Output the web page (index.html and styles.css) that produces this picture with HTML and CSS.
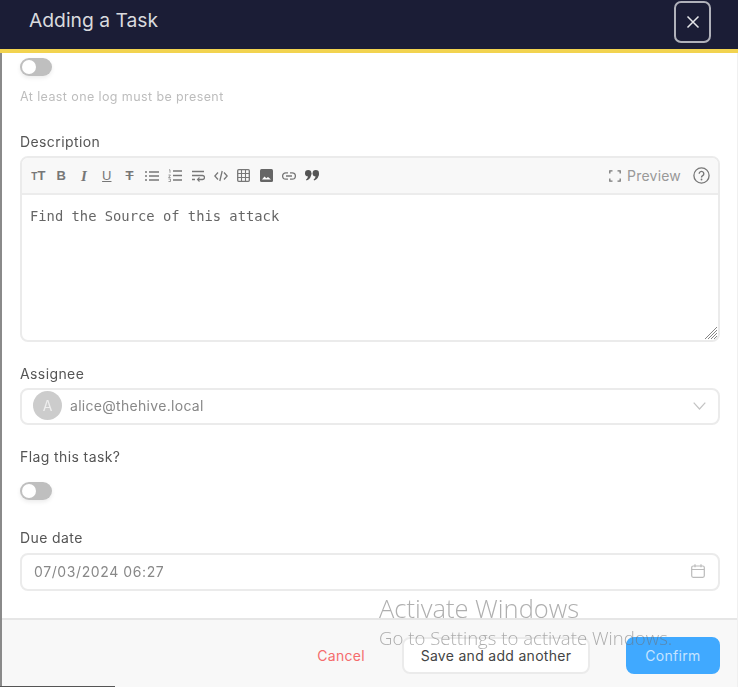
FILE: index.html
```html
<!DOCTYPE html>
<html lang="en">

<head>
  <meta charset="UTF-8" />
  <title>Adding a Task</title>
  <link rel="stylesheet" href="styles.css">
</head>

<body>
  <div class="drawer">
    <header class="drawer-head">
      <h1 class="drawer-title">Adding a Task</h1>
      <button class="close-btn" aria-label="Close">
        <svg width="14" height="14" viewBox="0 0 14 14"><path d="M1.5 1.5l11 11M12.5 1.5l-11 11" stroke="#e6e7ea" stroke-width="1.5" fill="none" /></svg>
      </button>
    </header>

    <main class="drawer-body">
      <span class="toggle"></span>
      <p class="hint">At least one log must be present</p>

      <label class="field-label label-description">Description</label>
      <div class="editor">
        <div class="toolbar">
          <span class="tool tool-text"><small>T</small>T</span>
          <span class="tool tool-text tool-b">B</span>
          <span class="tool tool-text tool-i">I</span>
          <span class="tool tool-text tool-u">U</span>
          <span class="tool tool-text tool-s">T</span>
          <span class="tool">
            <svg width="14" height="12" viewBox="0 0 14 12"><path d="M4 2h10M4 6h10M4 10h10M0 2h2M0 6h2M0 10h2" stroke="#777" stroke-width="1.3" fill="none" /></svg>
          </span>
          <span class="tool">
            <svg width="14" height="13" viewBox="0 0 14 13"><path d="M5 2h9M5 6.500h9M5 11h9" stroke="#777" stroke-width="1.3" fill="none" /><path d="M1 .8h1v3M.5 6h2L.6 8.500h2M.5 10h2v2.500h-2" stroke="#777" stroke-width=".7" fill="none" /></svg>
          </span>
          <span class="tool">
            <svg width="14" height="12" viewBox="0 0 14 12"><path d="M1 1.500h12M1 5.500h10.500a1.800 1.800 0 0 1 0 4H7M1 9.500h3" stroke="#777" stroke-width="1.300" fill="none" /><path d="M8.500 7.500l-2 2 2 2" stroke="#777" stroke-width="1.100" fill="none" /></svg>
          </span>
          <span class="tool">
            <svg width="14" height="12" viewBox="0 0 14 12"><path d="M4 2.500L.8 6 4 9.500M10 2.500L13.200 6 10 9.500M8.200 1L5.800 11" stroke="#777" stroke-width="1.300" fill="none" /></svg>
          </span>
          <span class="tool">
            <svg width="13" height="13" viewBox="0 0 13 13"><rect x=".7" y=".7" width="11.600" height="11.600" rx="1" stroke="#777" stroke-width="1.300" fill="none" /><path d="M.7 4.500h11.600M.7 8.500h11.600M4.500 .7v11.600M8.500 .7v11.600" stroke="#777" stroke-width="1.100" fill="none" /></svg>
          </span>
          <span class="tool">
            <svg width="13" height="13" viewBox="0 0 13 13"><rect width="13" height="13" rx="1.500" fill="#666" /><path d="M2 10.500l2.500-3 1.800 1.800 1.700-1.300 3 2.500z" fill="#fff" /></svg>
          </span>
          <span class="tool">
            <svg width="14" height="8" viewBox="0 0 14 8"><path d="M6 .8H3.800a3.200 3.200 0 0 0 0 6.400H6M8 .8h2.200a3.200 3.200 0 0 1 0 6.400H8M4 4h6" stroke="#777" stroke-width="1.300" fill="none" /></svg>
          </span>
          <span class="tool">
            <svg width="14" height="11" viewBox="0 0 14 11"><circle cx="3.200" cy="3.200" r="3.200" fill="#555" /><circle cx="10.800" cy="3.200" r="3.200" fill="#555" /><path d="M6.400 3.200C6.400 7 4.500 9.500 1.500 10.500L1 9.500C2.500 8.500 3 7 3 6M14 3.200C14 7 12.100 9.500 9.100 10.500L8.600 9.500C10.100 8.500 10.600 7 10.600 6z" fill="#555" /></svg>
          </span>
          <span class="toolbar-right">
            <svg width="12" height="12" viewBox="0 0 12 12"><path d="M.8 3.500V.8h2.700M8.500 .8h2.700v2.700M11.200 8.500v2.700H8.500M3.500 11.200H.8V8.500" stroke="#777" stroke-width="1.300" fill="none" /></svg>
            <span class="preview">Preview</span>
            <svg class="help" width="17" height="17" viewBox="0 0 17 17"><circle cx="8.500" cy="8.500" r="7.600" stroke="#777" stroke-width="1.300" fill="none" /><path d="M6.200 6.700a2.300 2.300 0 1 1 3.500 2c-.8 .5-1.200 .9-1.200 1.700" stroke="#777" stroke-width="1.400" fill="none" /><circle cx="8.500" cy="12.500" r=".9" fill="#777" /></svg>
          </span>
        </div>
        <div class="editor-text">
          Find the Source of this attack
          <svg class="grip" width="14" height="14" viewBox="0 0 14 14"><path d="M13 1L1 13M13 4L4 13M13 7L7 13M13 10l-3 3" stroke="#777" stroke-width=".9" fill="none" /></svg>
        </div>
      </div>

      <label class="field-label label-assignee">Assignee</label>
      <div class="select">
        <span class="avatar">A</span>
        <span class="select-value">alice@thehive.local</span>
        <svg class="chevron" width="13" height="8" viewBox="0 0 13 8"><path d="M.7 .7l5.800 6.300L12.300 .7" stroke="#c4c4c4" stroke-width="1.200" fill="none" /></svg>
      </div>

      <label class="field-label label-flag">Flag this task?</label>
      <span class="toggle toggle-flag"></span>

      <label class="field-label label-due">Due date</label>
      <div class="date-input">
        <span class="date-value">07/03/2024 06:27</span>
        <svg width="14" height="14" viewBox="0 0 14 14"><rect x=".7" y="2" width="12.600" height="11.300" rx="1.500" stroke="#bbb" stroke-width="1.200" fill="none" /><path d="M.7 5.500h12.600M4 .3v3M10 .3v3" stroke="#bbb" stroke-width="1.200" fill="none" /></svg>
      </div>
    </main>

    <footer class="drawer-foot">
      <a class="cancel">Cancel</a>
      <button class="btn">Save and add another</button>
      <button class="btn btn-primary">Confirm</button>
    </footer>
  </div>

  <!-- os watermark and taskbar sliver sit over the page -->
  <div class="watermark">
    <div class="watermark-title">Activate Windows</div>
    <div class="watermark-sub">Go to Settings to activate Windows.</div>
  </div>
  <div class="sliver"></div>
</body>

</html>
```

FILE: styles.css
```css
html,
body {
  height: 100%;
}

body {
  margin: 0;
  font-family: 'Inter', 'Open Sans', sans-serif;
  color: #555;
  background: #fff;
  overflow: hidden;
  position: relative;
}

.drawer {
  height: 687px;
  display: flex;
  flex-direction: column;
  border-left: 2px solid #8a8a8a;
  border-right: 1px solid #f0f0f0;
  box-sizing: border-box;
  filter: blur(0.5px);
}

.drawer-head {
  height: 53px;
  box-sizing: border-box;
  flex: none;
  margin-left: -2px;
  margin-right: -1px;
  background: #1b1d36;
  border-bottom: 4px solid #f2d34f;
  display: flex;
  align-items: center;
  justify-content: space-between;
  padding: 0 27px 9px 29px;
}

.drawer-title {
  margin: 0;
  font-size: 19.300px;
  font-weight: 400;
  color: #d9dade;
}

.close-btn {
  width: 37px;
  height: 42px;
  margin-top: 4px;
  padding: 0;
  background: transparent;
  border: 2px solid #b0b1ba;
  border-radius: 7px;
  display: flex;
  align-items: center;
  justify-content: center;
}

.drawer-body {
  flex: 1;
  padding: 5px 17px 0 18px;
  display: flex;
  flex-direction: column;
  align-items: flex-start;
}

.toggle {
  width: 32px;
  height: 18px;
  border-radius: 9px;
  background: #bfbfbf;
  position: relative;
  flex: none;
  box-shadow: 0 2px 4px rgba(0, 0, 0, 0.08);
}

.toggle::after {
  content: "";
  position: absolute;
  left: 2px;
  top: 2px;
  width: 14px;
  height: 14px;
  border-radius: 50%;
  background: #fff;
}

.hint {
  margin: 13px 0 0;
  font-size: 12.500px;
  letter-spacing: 0.4px;
  line-height: 16px;
  color: #bdbdbd;
}

.field-label {
  font-size: 14px;
  letter-spacing: 0.4px;
  line-height: 18px;
  color: #555;
}

.label-description {
  margin-top: 28px;
}

.editor {
  width: 100%;
  height: 186px;
  flex: none;
  margin-top: 5px;
  box-sizing: border-box;
  border: 2px solid #ebebeb;
  border-radius: 8px;
  display: flex;
  flex-direction: column;
  overflow: hidden;
}

.toolbar {
  height: 37px;
  flex: none;
  box-sizing: border-box;
  background: #f8f8f8;
  border-bottom: 2px solid #ececec;
  display: flex;
  align-items: center;
  padding-left: 5px;
  padding-right: 8px;
}

.tool {
  width: 22.800px;
  flex: none;
  display: flex;
  align-items: center;
  justify-content: center;
}

.tool-text {
  font-family: 'Liberation Sans', sans-serif;
  font-size: 13px;
  line-height: 14px;
  font-weight: 700;
  color: #777;
}

.tool-text small {
  font-size: 10px;
  margin-top: 3px;
}

.tool-i {
  font-style: italic;
  font-family: 'Liberation Serif', serif;
  font-size: 15px;
}

.tool-u {
  text-decoration: underline;
  font-weight: 400;
}

.tool-s {
  text-decoration: line-through;
  font-weight: 700;
}

.toolbar-right {
  margin-left: auto;
  display: flex;
  align-items: center;
  color: #999;
}

.preview {
  margin-left: 6px;
  font-size: 14px;
  letter-spacing: 0.2px;
}

.help {
  margin-left: 12px;
}

.editor-text {
  flex: 1;
  position: relative;
  padding: 13px 8px;
  font-family: 'DejaVu Sans Mono', monospace;
  font-size: 13.800px;
  line-height: 16px;
  color: #666;
}

.grip {
  position: absolute;
  right: 0;
  bottom: 0;
}

.label-assignee {
  margin-top: 23px;
}

.select,
.date-input {
  width: 100%;
  flex: none;
  box-sizing: border-box;
  border: 2px solid #ebebeb;
  border-radius: 8px;
  display: flex;
  align-items: center;
  font-size: 14px;
  color: #888;
}

.select {
  height: 37px;
  margin-top: 5px;
  padding: 0 12px 2px 11px;
}

.avatar {
  width: 29px;
  height: 29px;
  border-radius: 50%;
  background: #cccccc;
  color: #eee;
  font-size: 14px;
  display: flex;
  align-items: center;
  justify-content: center;
  flex: none;
}

.select-value {
  margin-left: 8px;
  letter-spacing: 0.3px;
}

.chevron {
  margin-left: auto;
}

.label-flag {
  margin-top: 23px;
}

.toggle-flag {
  margin-top: 16px;
}

.label-due {
  margin-top: 29px;
}

.date-input {
  height: 38px;
  margin-top: 6px;
  padding: 0 13px 2px 12px;
  justify-content: space-between;
}

.date-value {
  letter-spacing: 0.6px;
}

.drawer-foot {
  height: 69px;
  flex: none;
  box-sizing: border-box;
  background: #f8f8f8;
  border-top: 2px solid #e6e6e6;
  display: flex;
  align-items: center;
  justify-content: flex-end;
  padding: 4px 17px 0 0;
  font-size: 14px;
  letter-spacing: 0.3px;
}

.cancel {
  color: #f56c6c;
  margin-right: 37px;
}

.btn {
  height: 37px;
  padding: 0;
  width: 188px;
  font: inherit;
  letter-spacing: inherit;
  background: #fff;
  color: #444;
  border: 2px solid #ebebeb;
  border-radius: 8px;
}

.btn-primary {
  width: 94px;
  margin-left: 36px;
  background: #40a9ff;
  border-color: #40a9ff;
  color: #c5e4ff;
}

.watermark {
  position: absolute;
  left: 379px;
  top: 593px;
  color: rgba(110, 110, 110, 0.55);
  font-family: 'Open Sans', sans-serif;
  font-weight: 300;
  white-space: nowrap;
}

.watermark-title {
  font-size: 25.500px;
  line-height: 30px;
}

.watermark-sub {
  font-size: 18.600px;
  line-height: 30px;
}

.sliver {
  position: absolute;
  left: 0;
  bottom: 0;
  width: 115px;
  height: 1px;
  background: #555;
}
```
